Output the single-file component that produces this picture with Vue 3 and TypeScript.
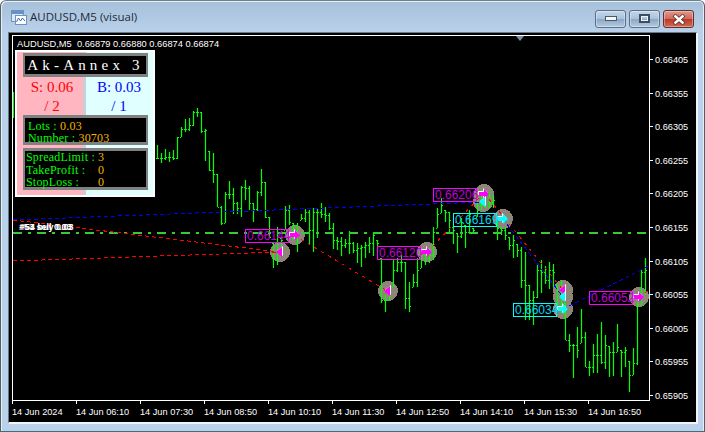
<template>
  <div class="window">
    <header class="titlebar">
      <svg class="app-icon" width="16" height="16" viewBox="0 0 16 16">
        <rect x="0.5" y="1.5" width="12" height="11" fill="#dfe9f5" stroke="#6f93bd" />
        <rect x="1" y="2" width="11" height="3" fill="#5f94cf" />
        <rect x="4.5" y="6.5" width="11" height="9" fill="#fff" stroke="#6f93bd" />
        <path d="M5.5 13 L7.5 9 L9.5 12 L11.5 9 L14 12" fill="none" stroke="#2f6fb5" />
      </svg>
      <span class="title">AUDUSD,M5 (visual)</span>
      <div class="controls">
        <button class="ctl">
          <svg width="12" height="6" viewBox="0 0 12 6"><rect x="0.5" y="0.5" width="11" height="4" fill="#f4f6f8" stroke="#4a5a6c" /></svg>
        </button>
        <button class="ctl">
          <svg width="12" height="10" viewBox="0 0 12 10"><rect x="1" y="1" width="9" height="7" fill="none" stroke="#3f4d5e" stroke-width="2" /><rect x="2.5" y="2.5" width="6" height="4" fill="none" stroke="#eef2f6" /></svg>
        </button>
        <button class="ctl close">
          <svg width="14" height="11" viewBox="0 0 14 11"><path d="M2 1 L12 10 M12 1 L2 10" stroke="#5a2a24" stroke-width="4" /><path d="M2.5 1.5 L11.5 9.5 M11.5 1.5 L2.5 9.5" stroke="#fff" stroke-width="2.4" /></svg>
        </button>
      </div>
    </header>

    <main class="client">
      <div class="chart">
        <div class="plot">
          <svg class="canvas" width="636" height="364" viewBox="13 36 636 364">
            <circle v-for="(m, i) in markers" :key="'c' + i" :cx="m.x" :cy="m.y" r="10" fill="#8e8579" shape-rendering="crispEdges" />
            <path :d="wicksPath" fill="none" stroke="#00ff00" stroke-width="1.2" />
            <path :d="ticksPath" fill="none" stroke="#00ff00" />
            <path d="M13 232.5 H649" stroke="#32cd32" stroke-width="2" stroke-dasharray="9 6 3 6" shape-rendering="crispEdges" />
            <path
              d="M13 220 L279 252 M13 261 L279 252"
              stroke="#ff0000"
              stroke-dasharray="4 3"
              shape-rendering="crispEdges"
            />
            <path
              d="M294 235 L387 291 M427 252 L484 193 M484 193 L563 290 M638 297 L649 290"
              stroke="#ff0000"
              stroke-dasharray="3 5"
              shape-rendering="crispEdges"
            />
            <path
              d="M13 220 L483 202 M503 219 L563 297 M563 309 L649 266"
              stroke="#0000ff"
              stroke-dasharray="4 3"
              shape-rendering="crispEdges"
            />
            <text class="order" x="19" y="230">#53 sell 0.03</text>
            <text class="order" x="20" y="230">#54 buy 0.03</text>
            <g v-for="(m, i) in markers" :key="'a' + i">
              <template v-if="m.dir === 'left'">
                <polygon :points="leftArrow(m.x + 1, m.y - 1)" fill="#fff" />
                <polygon :points="leftArrow(m.x, m.y)" :fill="m.color" />
              </template>
              <template v-else>
                <polygon :points="rightArrow(m.x - 1, m.y - 1)" fill="#fff" />
                <polygon :points="rightArrow(m.x, m.y)" :fill="m.color" />
              </template>
            </g>
            <g v-for="l in labels" :key="l.text">
              <rect :x="l.x + 0.5" :y="l.y + 0.5" width="43" height="13" fill="none" :stroke="l.color" shape-rendering="crispEdges" />
              <text class="price-label" :x="l.x + 2" :y="l.y + 11" :fill="l.text_color">{{ l.text }}</text>
            </g>
          </svg>

          <div class="symbol">AUDUSD,M5&nbsp; 0.66879 0.66880 0.66874 0.66874</div>
          <div class="sep-mark"></div>

          <section class="panel">
            <div class="panel-title">Ak-Annex 3</div>
            <div class="stats">
              <div class="stat sell">S: 0.06<br />/ 2</div>
              <div class="stat buy">B: 0.03<br />/ 1</div>
            </div>
            <div class="box lots">
              <div>Lots : <b>0.03</b></div>
              <div>Number : <b>30703</b></div>
            </div>
            <div class="box limits">
              <span>SpreadLimit :</span><b>3</b>
              <span>TakeProfit :</span><b>0</b>
              <span>StopLoss :</span><b>0</b>
            </div>
          </section>
        </div>

        <div class="price-axis">
          <div v-for="p in prices" :key="p" class="price">{{ p }}</div>
        </div>

        <div class="time-axis">
          <div v-for="t in times" :key="t" class="time">{{ t }}</div>
        </div>
      </div>
    </main>
  </div>
</template>

<script setup lang="ts">
import { computed } from 'vue'

type Marker = { x: number; y: number; dir: 'left' | 'right'; color: string }

const MAGENTA = '#ff00ff'
const CYAN = '#00ffff'

// high, low, close in screen pixels, one bar every 4px from x = 157
const bars: number[][] = [
  [145, 159, 158], [153, 163, 158], [149, 160, 157], [152, 162, 157], [150, 160, 158],
  [137, 159, 137], [127, 137, 129], [119, 132, 129], [118, 131, 125], [111, 126, 112],
  [108, 117, 112], [112, 133, 131], [129, 161, 130], [151, 171, 170], [153, 183, 174],
  [174, 207, 207], [206, 225, 223], [192, 223, 194], [181, 199, 194], [188, 214, 203],
  [202, 214, 208], [186, 217, 187], [180, 200, 188], [186, 210, 203], [203, 222, 209],
  [191, 211, 192], [169, 196, 182], [182, 218, 217], [217, 238, 237], [243, 268, 258],
  [227, 265, 232], [238, 250, 240], [206, 230, 210], [205, 225, 222], [223, 240, 225],
  [223, 252, 226], [214, 220, 218], [209, 222, 212], [210, 245, 230], [208, 252, 212],
  [209, 238, 212], [203, 218, 214], [207, 222, 215], [213, 230, 228], [223, 249, 240],
  [237, 250, 241], [237, 256, 245], [239, 248, 243], [231, 254, 243], [242, 253, 250],
  [243, 263, 248], [245, 267, 247], [242, 258, 245], [237, 253, 243], [232, 256, 235],
  [240, 252, 243], [258, 303, 300], [295, 312, 300], [287, 300, 290], [260, 287, 270],
  [258, 272, 262], [255, 272, 262], [262, 309, 298], [282, 312, 306], [274, 287, 282],
  [258, 287, 270], [248, 268, 255], [255, 265, 258], [248, 263, 255], [227, 260, 232],
  [208, 228, 214], [198, 213, 205], [210, 222, 212], [212, 232, 220], [227, 244, 230],
  [233, 253, 236], [218, 238, 222], [225, 248, 232], [210, 232, 214], [228, 234, 230],
  [192, 217, 205], [190, 210, 194], [197, 208, 203], [192, 208, 202], [195, 208, 200],
  [222, 240, 228], [227, 235, 230], [227, 240, 235], [237, 250, 245], [235, 258, 240],
  [244, 257, 250], [247, 288, 280], [252, 320, 285], [285, 320, 300], [291, 325, 297],
  [263, 298, 270], [260, 293, 272], [266, 284, 280], [262, 289, 270], [264, 287, 272],
  [285, 310, 290], [280, 313, 300], [303, 340, 340], [334, 352, 345], [344, 378, 345],
  [327, 358, 350], [309, 343, 337], [332, 367, 367], [361, 376, 367], [344, 373, 355],
  [334, 373, 355], [322, 364, 362], [335, 369, 345], [346, 377, 352], [342, 376, 352],
  [324, 352, 347], [350, 377, 352], [347, 367, 350], [361, 392, 375], [348, 375, 363],
  [302, 365, 305], [270, 305, 272], [258, 295, 270]
]

const wicksPath = computed(() => {
  let d = 'M13.5 92 V118'
  bars.forEach(([hi, lo], i) => {
    d += ` M${157 + i * 4 + 0.5} ${hi} V${lo}`
  })
  return d
})

const ticksPath = computed(() => {
  let d = ''
  let prev = bars[0][2]
  bars.forEach(([hi, lo, close], i) => {
    const x = 157 + i * 4
    const open = Math.min(Math.max(prev, hi), lo)
    d += ` M${x - 1} ${open + 0.5} H${x} M${x + 1} ${close + 0.5} H${x + 2}`
    prev = close
  })
  return d
})

const markers: Marker[] = [
  { x: 280, y: 252, dir: 'left', color: MAGENTA },
  { x: 295, y: 235, dir: 'right', color: MAGENTA },
  { x: 388, y: 291, dir: 'left', color: MAGENTA },
  { x: 427, y: 252, dir: 'right', color: MAGENTA },
  { x: 484, y: 194, dir: 'right', color: MAGENTA },
  { x: 483, y: 202, dir: 'left', color: CYAN },
  { x: 503, y: 219, dir: 'right', color: CYAN },
  { x: 563, y: 290, dir: 'left', color: MAGENTA },
  { x: 563, y: 297, dir: 'left', color: CYAN },
  { x: 563, y: 309, dir: 'right', color: CYAN },
  { x: 639, y: 297, dir: 'right', color: MAGENTA }
]

const labels = [
  { text: '0.66144', x: 245, y: 229, color: MAGENTA, text_color: '#c000d8' },
  { text: '0.66120', x: 377, y: 246, color: MAGENTA, text_color: '#c000d8' },
  { text: '0.66206', x: 433, y: 188, color: MAGENTA, text_color: '#c000d8' },
  { text: '0.66052', x: 589, y: 291, color: MAGENTA, text_color: '#c000d8' },
  { text: '0.66169', x: 453, y: 213, color: CYAN, text_color: '#00d8f0' },
  { text: '0.66034', x: 513, y: 303, color: CYAN, text_color: '#00d8f0' }
]

const leftArrow = (x: number, y: number) =>
  `${x - 4},${y} ${x + 2},${y - 5} ${x + 2},${y + 5}`

const rightArrow = (x: number, y: number) =>
  [
    [x - 5, y - 2], [x, y - 2], [x, y - 5], [x + 5, y],
    [x, y + 5], [x, y + 2], [x - 5, y + 2]
  ].map((p) => p.join(',')).join(' ')

const prices = ['0.66405', '0.66355', '0.66305', '0.66255', '0.66205', '0.66155', '0.66105', '0.66055', '0.66005', '0.65955', '0.65905']
const times = ['14 Jun 2024', '14 Jun 06:10', '14 Jun 07:30', '14 Jun 08:50', '14 Jun 10:10', '14 Jun 11:30', '14 Jun 12:50', '14 Jun 14:10', '14 Jun 15:30', '14 Jun 16:50']
</script>

<style>
html,
body {
  margin: 0;
  background: #fff;
  overflow: hidden;
}
</style>

<style scoped>
.window {
  box-sizing: border-box;
  width: 705px;
  height: 432px;
  display: flex;
  flex-direction: column;
  border: 1px solid #4e5f66;
  border-top-color: #6f7f8c;
  border-bottom-color: #3f6f78;
  border-radius: 6px 6px 0 0;
  background: linear-gradient(180deg, #a7c1db 0, #b9d1ea 32px);
  box-shadow: inset 1px 1px 0 #e6eef6, inset -1px 0 0 #e6eef6;
  font-family: 'Liberation Sans', Arial, sans-serif;
}

.titlebar {
  height: 31px;
  display: flex;
  align-items: center;
  padding: 0 10px 0 10px;
  flex-shrink: 0;
}

.app-icon {
  margin-right: 3px;
  margin-top: 1px;
}

.title {
  font-family: 'Open Sans', 'Noto Sans', sans-serif;
  font-size: 11.5px;
  color: #1d2a38;
}

.controls {
  margin-left: auto;
  display: flex;
  gap: 3px;
  margin-top: 5px;
}

.ctl {
  width: 31px;
  height: 18px;
  padding: 0;
  display: flex;
  align-items: center;
  justify-content: center;
  border: 1px solid #5b7088;
  border-radius: 3px;
  background: linear-gradient(180deg, #c4d7ea 0, #a9c2da 48%, #8aa7c4 52%, #b4cce2 100%);
  box-shadow: inset 0 0 0 1px rgba(255, 255, 255, 0.35);
}

.ctl.close {
  border-color: #6a2c28;
  background: linear-gradient(180deg, #dc9a90 0, #cf6a5c 48%, #b93a2b 52%, #cf6a52 100%);
}

.client {
  flex: 1;
  margin: 0 6px 7px 7px;
  min-height: 0;
  border-top: 1px solid #66788a;
  border-left: 1px solid #66788a;
  border-right: 2px solid #f2f5f8;
  border-bottom: 2px solid #f2f5f8;
  background: #000;
}

.chart {
  height: 100%;
  box-sizing: border-box;
  padding: 2px 0 0 3px;
  display: grid;
  grid-template-columns: 638px 1fr;
  grid-template-rows: 366px 1fr;
  color: #fff;
}

.plot {
  position: relative;
  border: 1px solid #fff;
  overflow: hidden;
}

.canvas {
  display: block;
}

.order {
  font-size: 9px;
  font-weight: 700;
  fill: #fff;
}

.price-label {
  font-size: 12px;
}

.symbol {
  position: absolute;
  left: 4px;
  top: 2px;
  font-size: 9.3px;
  line-height: 12px;
  white-space: nowrap;
}

.sep-mark {
  position: absolute;
  left: 503px;
  top: 0;
  border-left: 4px solid transparent;
  border-right: 4px solid transparent;
  border-top: 5px solid #7a8fa8;
}

.panel {
  position: absolute;
  left: 2px;
  top: 14px;
  box-sizing: border-box;
  width: 140px;
  height: 147px;
  border: 2px solid #fff;
  padding: 1px 5px 0 6px;
  background: linear-gradient(90deg, #ffb6c1 0 66px, #c4d2d6 66px 69px, #e0ffff 69px);
  font-family: 'Liberation Serif', 'Times New Roman', serif;
}

.panel-title {
  box-sizing: border-box;
  height: 24px;
  border: solid #808080;
  border-width: 3px 2px;
  background: #000;
  color: #fff;
  font-size: 15px;
  line-height: 18px;
  letter-spacing: 4.2px;
  text-align: center;
  white-space: nowrap;
}

.stats {
  height: 38px;
  display: grid;
  grid-template-columns: 58px 1fr;
  margin-right: -1px;
}

.stat {
  font-size: 15px;
  line-height: 19px;
  text-align: center;
  padding-top: 1px;
}

.sell {
  color: #ff0000;
}

.buy {
  color: #0000ff;
  padding-left: 8px;
}

.box {
  box-sizing: border-box;
  border: solid #808080;
  border-width: 3px 2px;
  background: #000;
  color: #00ff00;
  font-size: 12px;
  letter-spacing: 0.2px;
}

.box b {
  font-weight: 400;
  color: #f5b400;
}

.lots {
  height: 30px;
  padding: 2px 0 0 3px;
  line-height: 12px;
}

.limits {
  height: 42px;
  margin-top: 3px;
  padding: 0 0 0 1px;
  line-height: 12.5px;
  display: grid;
  grid-template-columns: 72px 1fr;
  white-space: nowrap;
}

.price-axis {
  position: relative;
  grid-row: 1;
  grid-column: 2;
  display: flex;
  flex-direction: column;
  padding-top: 19px;
}

.price {
  flex: 0 0 33.6px;
  line-height: 12px;
  padding-left: 5px;
  font-size: 9.2px;
  position: relative;
}

.price::before {
  content: '';
  position: absolute;
  left: 0;
  top: 5px;
  width: 3px;
  height: 1px;
  background: #fff;
}

.time-axis {
  grid-column: 1 / 3;
  grid-row: 2;
  display: flex;
}

.time {
  position: relative;
  width: 64px;
  flex-shrink: 0;
  padding-top: 5px;
  font-size: 9.2px;
  line-height: 12px;
  white-space: nowrap;
}

.time::before {
  content: '';
  position: absolute;
  left: 0;
  top: 0;
  width: 1px;
  height: 3px;
  background: #fff;
}
</style>
